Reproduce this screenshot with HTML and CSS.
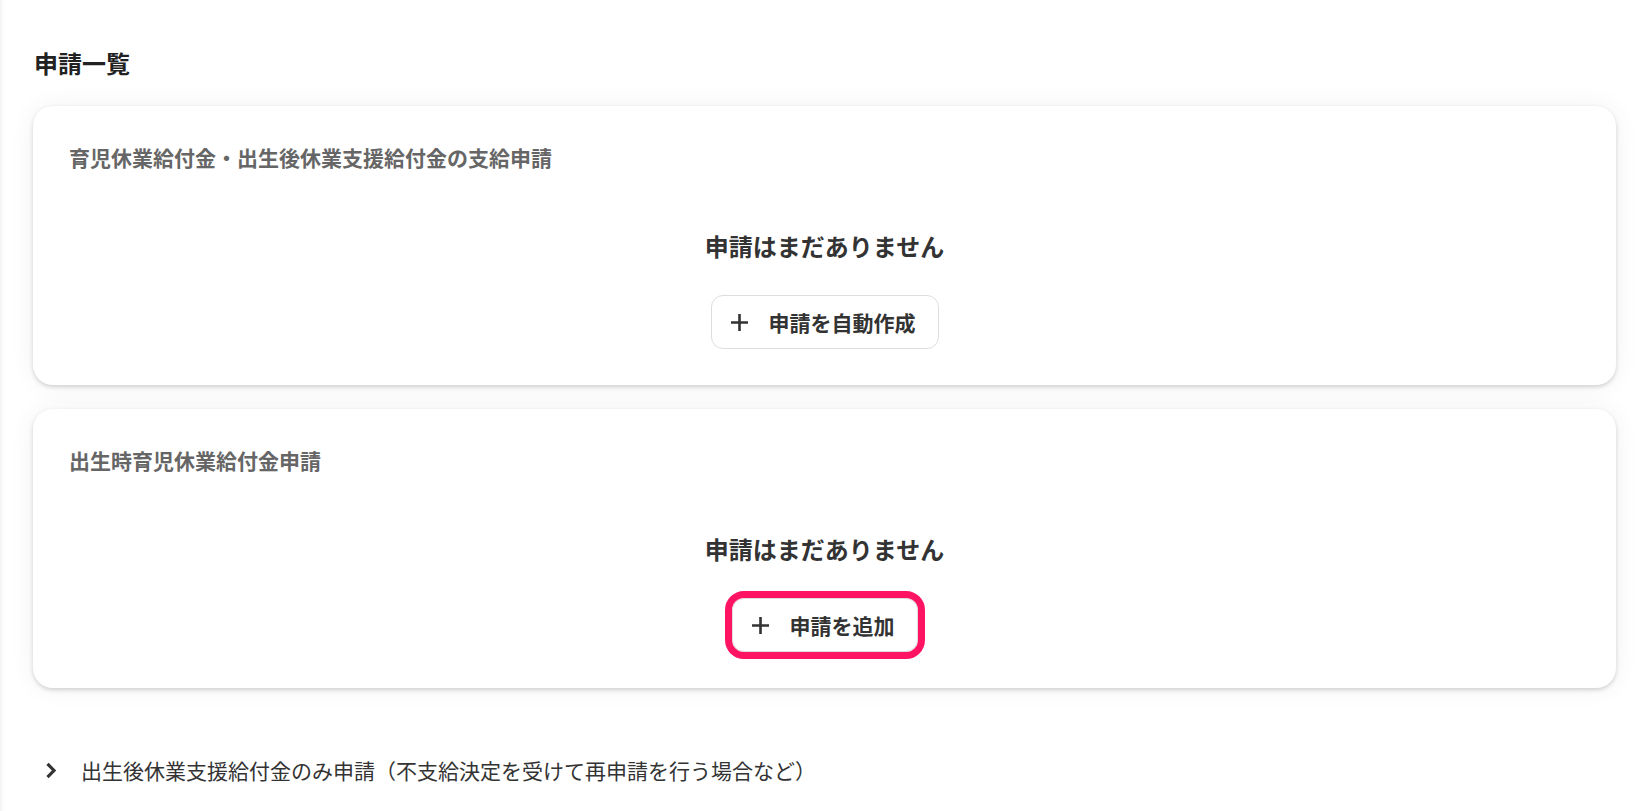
FILE: index.html
```html
<!DOCTYPE html>
<html lang="ja">
  <head>
    <meta charset="UTF-8" />
    <meta name="viewport" content="width=device-width, initial-scale=1.0" />
    <title>申請一覧</title>
    <link rel="stylesheet" href="styles.css">
  </head>
  <body>
    <main class="page">
      <h2 class="page-title">申請一覧</h2>

      <section class="card">
        <h3 class="card-title">育児休業給付金・出生後休業支援給付金の支給申請</h3>
        <div class="empty">
          <p class="empty-text">申請はまだありません</p>
          <button type="button" class="add-button">
            <svg class="plus" width="19" height="19" viewBox="0 0 19 19"><path d="M9.5 1v17M1 9.5h17" stroke="#333" stroke-width="2.6" fill="none"/></svg>
            <span>申請を自動作成</span>
          </button>
        </div>
      </section>

      <section class="card">
        <h3 class="card-title">出生時育児休業給付金申請</h3>
        <div class="empty">
          <p class="empty-text">申請はまだありません</p>
          <button type="button" class="add-button highlighted">
            <svg class="plus" width="19" height="19" viewBox="0 0 19 19"><path d="M9.5 1v17M1 9.5h17" stroke="#333" stroke-width="2.6" fill="none"/></svg>
            <span>申請を追加</span>
          </button>
        </div>
      </section>

      <div class="disclosure">
        <svg class="chevron" width="12" height="17" viewBox="0 0 12 17"><path d="M2.5 1.8l6.5 6.7-6.5 6.7" stroke="#333" stroke-width="3.2" fill="none"/></svg>
        <span>出生後休業支援給付金のみ申請（不支給決定を受けて再申請を行う場合など）</span>
      </div>
    </main>
  </body>
</html>
```

FILE: styles.css
```css
body {
  margin: 0;
  background-color: #fff;
  font-family: "Noto Sans CJK JP", "Noto Sans", sans-serif;
  color: #333;
}
.page {
  padding: 48px 34px 0 33px;
  box-shadow: inset 5px 0 5px -5px rgba(0, 0, 0, 0.1);
  min-height: 763px;
}
.page-title {
  margin: 0 0 28px 1px;
  font-size: 24px;
  line-height: 30px;
  font-weight: bold;
  color: #222;
}
.card {
  background-color: #fff;
  border-radius: 20px;
  padding: 36px;
  margin-bottom: 24px;
  box-shadow: 0 2px 4px rgba(0, 0, 0, 0.16), 0 0 26px rgba(0, 0, 0, 0.06);
}
.card-title {
  margin: 0;
  font-size: 21px;
  line-height: 30px;
  font-weight: bold;
  color: #666;
}
.empty {
  margin-top: 57px;
  display: flex;
  flex-direction: column;
  align-items: center;
}
.empty-text {
  margin: 0;
  font-size: 24px;
  line-height: 34px;
  font-weight: bold;
  color: #333;
}
.add-button {
  margin-top: 32px;
  height: 54px;
  display: flex;
  align-items: center;
  gap: 20px;
  padding: 0 22px 0 18px;
  background-color: #fff;
  border: 1px solid #ddd;
  border-radius: 12px;
  font-family: inherit;
  font-size: 21px;
  font-weight: bold;
  color: #333;
  cursor: pointer;
}
.add-button.highlighted {
  outline: 7px solid #ff1464;
  outline-offset: 0;
}
.plus {
  display: block;
}
.disclosure {
  margin-top: 67px;
  display: flex;
  align-items: center;
  gap: 24px;
  padding-left: 12px;
  font-size: 21px;
  line-height: 30px;
  color: #333;
}
.chevron {
  display: block;
}
```
